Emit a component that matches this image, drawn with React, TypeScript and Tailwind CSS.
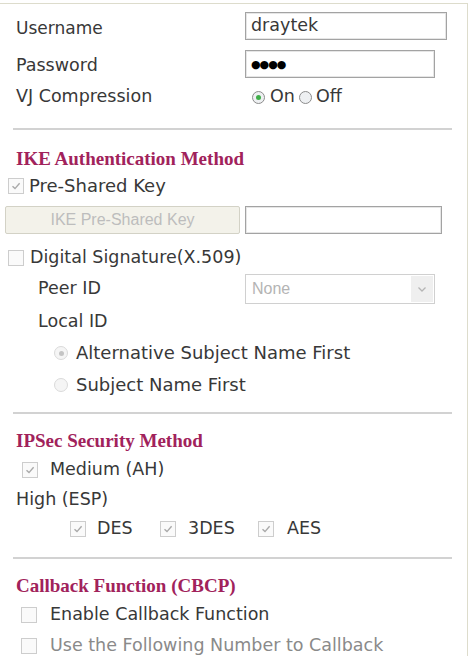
import React from "react";

const SANS = "font-['DejaVu_Sans','Verdana',sans-serif]";
const HEAD =
  "font-['Liberation_Serif','Times_New_Roman',serif] font-bold text-[19px] text-[#a1225b] leading-none";

function Check({ checked = false, className = "" }: { checked?: boolean; className?: string }) {
  return (
    <span
      className={`flex h-[16px] w-[16px] shrink-0 items-center justify-center border border-[#cdcdcd] bg-[#fafafa] ${className}`}
    >
      {checked && (
        <svg width="10" height="10" viewBox="0 0 10 10">
          <path d="M1.5 5.2 L4 7.6 L8.6 2.2" fill="none" stroke="#a9a9a9" strokeWidth="1.4" />
        </svg>
      )}
    </span>
  );
}

function Radio({
  checked = false,
  disabled = false,
  className = "",
}: {
  checked?: boolean;
  disabled?: boolean;
  className?: string;
}) {
  const ring = disabled ? "border-[#dadada] bg-[#f5f5f5]" : "border-[#8c8c8c] bg-[#eef0f2]";
  const dot = disabled ? "bg-[#c4c4c4]" : "bg-[#3fae49]";
  return (
    <span
      className={`flex h-[13px] w-[13px] shrink-0 items-center justify-center rounded-full border ${ring} ${className}`}
    >
      {checked && <span className={`h-[5px] w-[5px] rounded-full ${dot}`} />}
    </span>
  );
}

function Divider({ className = "" }: { className?: string }) {
  return <div className={`ml-[13px] h-[2px] w-[439px] bg-[#d2d2d2] ${className}`} />;
}

export default function App() {
  return (
    <div className={`min-h-[656px] bg-white ${SANS} text-[17.5px] leading-none text-[#383838]`}>
      <div className="mt-[3px] w-[468px] border-t border-r border-[#dddccc] pt-[8px] pb-[20px]">
        {/* login */}
        <div className="flex h-[28px] items-center">
          <span className="w-[245px] pt-[4px] pl-[16px] text-[17px]">Username</span>
          <div className="flex h-[28px] w-[202px] items-center border border-[#a3a3a3] px-[5px] shadow-[inset_0_0_0_1px_#e6e6e6]">
            draytek
          </div>
        </div>
        <div className="mt-[10px] flex h-[28px] items-center">
          <span className="w-[245px] pt-[3px] pl-[16px]">Password</span>
          <div className="flex h-[28px] w-[190px] items-center border border-[#a3a3a3] px-[5px] shadow-[inset_0_0_0_1px_#e6e6e6]">
            <span className="text-[11px] tracking-[-1px] text-black">●●●●</span>
          </div>
        </div>
        <div className="mt-[7px] flex h-[24px] items-center">
          <span className="w-[246px] pl-[16px]">VJ Compression</span>
          <Radio checked className="ml-[6px]" />
          <span className="ml-[5px]">On</span>
          <Radio className="ml-[4px]" />
          <span className="ml-[4px]">Off</span>
        </div>

        <Divider className="mt-[19px]" />

        {/* IKE */}
        <div className="mt-[16px] flex h-[24px] items-center pl-[16px]">
          <span className={HEAD}>IKE Authentication Method</span>
        </div>
        <div className="mt-[4px] flex h-[24px] items-center pl-[8px]">
          <Check checked />
          <span className="ml-[5px] text-[18px]">Pre-Shared Key</span>
        </div>
        <div className="mt-[8px] flex h-[28px] items-center">
          <div className="ml-[5px] flex h-[28px] w-[235px] items-center justify-center rounded-[2px] border border-[#d3d2c6] bg-[#f3f2ea] font-['Liberation_Sans',Arial,sans-serif] text-[16px] text-[#bdbdbd]">
            IKE Pre-Shared Key
          </div>
          <div className="ml-[5px] h-[28px] w-[197px] border border-[#a3a3a3] shadow-[inset_0_0_0_1px_#e6e6e6]" />
        </div>
        <div className="mt-[12px] flex h-[24px] items-center pl-[8px]">
          <Check />
          <span className="ml-[6px]">Digital Signature(X.509)</span>
        </div>
        <div className="mt-[4px] flex h-[30px] items-center">
          <span className="w-[245px] pl-[38px]">Peer ID</span>
          <div className="flex h-[30px] w-[190px] items-center border border-[#d0d0d0] bg-white">
            <span className="flex-1 pl-[6px] font-['Liberation_Sans',Arial,sans-serif] text-[16px] text-[#b4b4b4]">
              None
            </span>
            <span className="mr-[1px] flex h-[26px] w-[22px] items-center justify-center bg-[#efefef]">
              <svg width="10" height="7" viewBox="0 0 10 7">
                <path d="M1.5 1.5 L5 5 L8.5 1.5" fill="none" stroke="#b5b5b5" strokeWidth="1.3" />
              </svg>
            </span>
          </div>
        </div>
        <div className="mt-[6px] flex h-[24px] items-center pl-[38px]">Local ID</div>
        <div className="mt-[7px] flex h-[24px] items-center pl-[54px]">
          <Radio checked disabled className="h-[14px] w-[14px]" />
          <span className="ml-[8px] text-[18px]">Alternative Subject Name First</span>
        </div>
        <div className="mt-[8px] flex h-[24px] items-center pl-[54px]">
          <Radio disabled className="h-[14px] w-[14px]" />
          <span className="ml-[8px] text-[18px]">Subject Name First</span>
        </div>

        <Divider className="mt-[15px]" />

        {/* IPSec */}
        <div className="mt-[14px] flex h-[24px] items-center pl-[16px]">
          <span className={HEAD}>IPSec Security Method</span>
        </div>
        <div className="mt-[6px] flex h-[24px] items-center pl-[22px]">
          <Check checked />
          <span className="ml-[12px]">Medium (AH)</span>
        </div>
        <div className="mt-[6px] flex h-[24px] items-center pl-[16px]">High (ESP)</div>
        <div className="mt-[5px] flex h-[24px] items-center pl-[70px]">
          <Check checked />
          <span className="ml-[11px] w-[63px]">DES</span>
          <Check checked />
          <span className="ml-[12px] w-[70px]">3DES</span>
          <Check checked />
          <span className="ml-[13px]">AES</span>
        </div>

        <Divider className="mt-[16px]" />

        {/* Callback */}
        <div className="mt-[14px] flex h-[24px] items-center pl-[16px]">
          <span className={HEAD}>Callback Function (CBCP)</span>
        </div>
        <div className="mt-[6px] flex h-[24px] items-center pl-[21px]">
          <Check />
          <span className="ml-[13px]">Enable Callback Function</span>
        </div>
        <div className="mt-[7px] flex h-[24px] items-center pl-[21px] text-[#8a8a8a]">
          <Check />
          <span className="ml-[13px]">Use the Following Number to Callback</span>
        </div>
      </div>
    </div>
  );
}
